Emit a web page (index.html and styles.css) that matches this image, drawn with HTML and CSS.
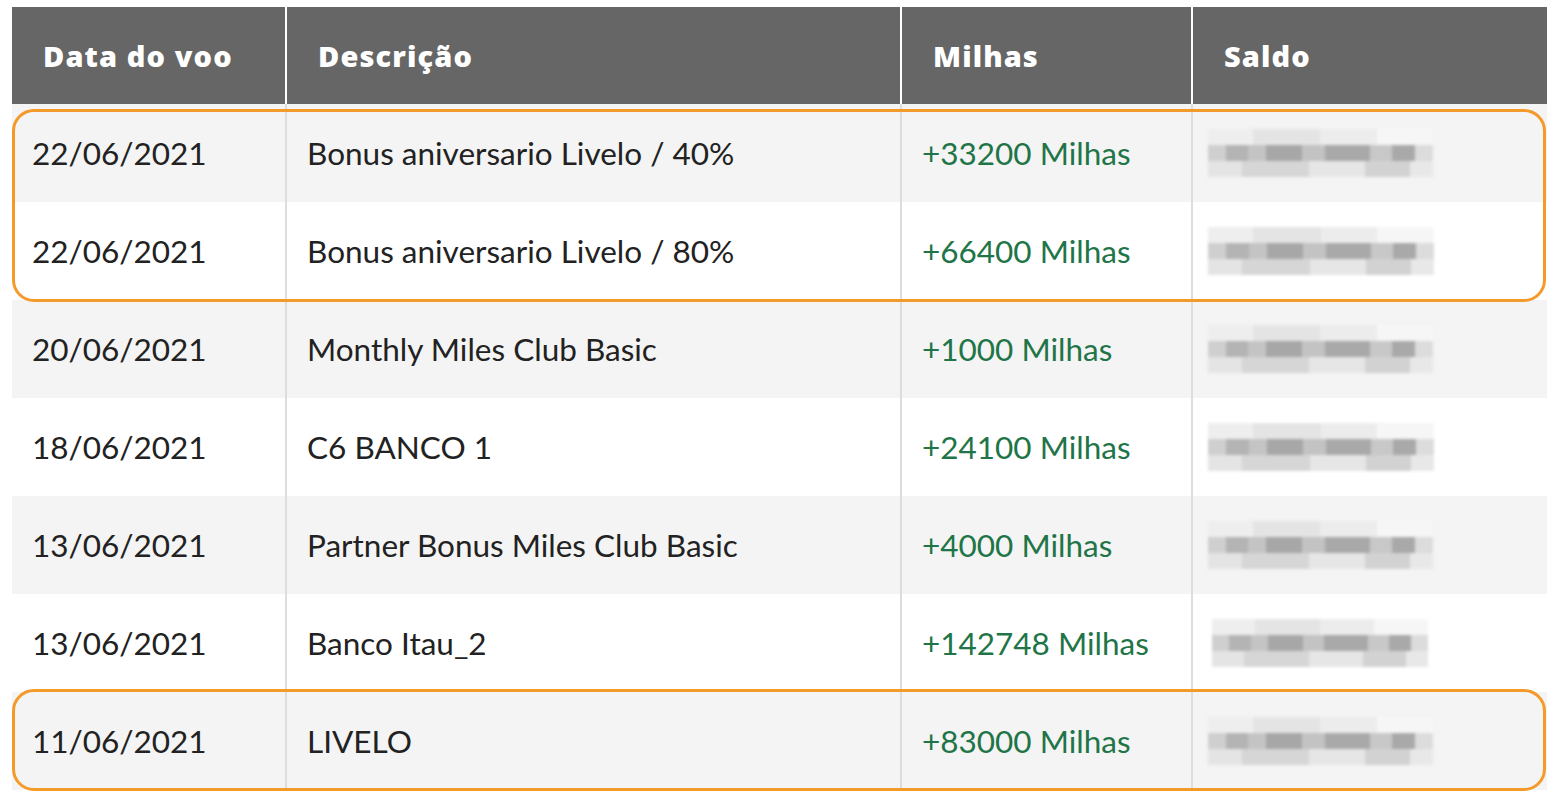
FILE: index.html
```html
<!DOCTYPE html>
<html lang="pt">
<head>
<meta charset="utf-8">
<link rel="stylesheet" href="styles.css">
</head>
<body>
<div class="wrap">
  <table class="miles">
    <colgroup>
      <col class="c1"><col class="c2"><col class="c3"><col class="c4">
    </colgroup>
    <thead>
      <tr>
        <th class="h1">Data do voo</th>
        <th>Descrição</th>
        <th>Milhas</th>
        <th>Saldo</th>
      </tr>
    </thead>
    <tbody>
      <tr><td>22/06/2021</td><td>Bonus aniversario Livelo / 40%</td><td class="pos">+33200 Milhas</td><td class="bal"><span class="blur b1"></span></td></tr>
      <tr><td>22/06/2021</td><td>Bonus aniversario Livelo / 80%</td><td class="pos">+66400 Milhas</td><td class="bal"><span class="blur b2"></span></td></tr>
      <tr><td>20/06/2021</td><td>Monthly Miles Club Basic</td><td class="pos">+1000 Milhas</td><td class="bal"><span class="blur b1"></span></td></tr>
      <tr><td>18/06/2021</td><td>C6 BANCO 1</td><td class="pos">+24100 Milhas</td><td class="bal"><span class="blur b2"></span></td></tr>
      <tr><td>13/06/2021</td><td>Partner Bonus Miles Club Basic</td><td class="pos">+4000 Milhas</td><td class="bal"><span class="blur b1"></span></td></tr>
      <tr><td>13/06/2021</td><td>Banco Itau_2</td><td class="pos">+142748 Milhas</td><td class="bal"><span class="blur b3"></span></td></tr>
      <tr><td>11/06/2021</td><td>LIVELO</td><td class="pos">+83000 Milhas</td><td class="bal"><span class="blur b1"></span></td></tr>
    </tbody>
  </table>
  <div class="hl hl-top"></div>
  <div class="hl hl-bottom"></div>
</div>
</body>
</html>
```
FILE: styles.css
```css
html, body {
  margin: 0;
  padding: 0;
  background: #ffffff;
}
body {
  font-family: Lato, "Liberation Sans", sans-serif;
  color: #222222;
}
.wrap {
  position: relative;
  padding: 7px 13px 0 12px;
  height: 789px;
  overflow: hidden;
}
.miles {
  width: 1535px;
  border-collapse: collapse;
  table-layout: fixed;
}
.c1 { width: 274px; }
.c2 { width: 615px; }
.c3 { width: 291px; }
.c4 { width: 355px; }
.miles th {
  background: #666666;
  color: #ffffff;
  font-family: "Open Sans", "Liberation Sans", sans-serif;
  font-weight: 800;
  font-size: 29px;
  letter-spacing: 1.1px;
  text-align: left;
  height: 97px;
  padding: 0 0 0 31px;
  box-sizing: border-box;
  border-left: 2px solid #ffffff;
}
.miles th.h1 { border-left: none; }
.miles td {
  height: 98px;
  padding: 0 0 0 20px;
  box-sizing: border-box;
  font-size: 31.5px;
  border-left: 2px solid #dddddd;
  white-space: nowrap;
}
.miles td:first-child { border-left: none; }
.miles tbody tr:nth-child(odd) td { background: #f4f4f4; }
.miles tbody tr:nth-child(even) td { background: #ffffff; }
.miles td.pos { color: #1f7548; }
.miles td.bal { padding-left: 15px; }
.blur {
  display: block;
  width: 225px;
  height: 48px;
  filter: blur(1.5px);
  background:
    linear-gradient(90deg, #cfcfcf 0 8%, #b4b4b4 8% 18%, #c4c4c4 18% 26%, #a7a7a7 26% 42%, #c3c3c3 42% 52%, #a9a9a9 52% 72%, #c8c8c8 72% 82%, #a9a9a9 82% 92%, #dcdcdc 92% 100%) 0 16px / 100% 16px no-repeat,
    linear-gradient(90deg, #eeeeee 0 20%, #e4e4e4 20% 50%, #ececec 50% 75%, #f6f6f6 75% 100%) 0 0 / 100% 16px no-repeat,
    linear-gradient(90deg, #e4e4e4 0 15%, #d6d6d6 15% 45%, #e6e6e6 45% 70%, #d2d2d2 70% 90%, #e8e8e8 90% 100%) 0 32px / 100% 16px no-repeat;
}
.b2 { width: 226px; }
.b3 { width: 216px; margin-left: 4px; }
.hl {
  position: absolute;
  left: 12px;
  width: 1534px;
  border: 3px solid #f39a2b;
  border-radius: 22px;
  box-sizing: border-box;
  pointer-events: none;
}
.hl-top { top: 109px; height: 193px; }
.hl-bottom { top: 689px; height: 102px; }
```
